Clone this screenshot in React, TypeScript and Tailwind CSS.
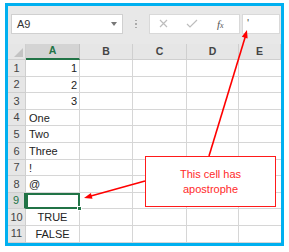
import { Fragment } from "react";

const cols = ["A", "B", "C", "D", "E"];

const rows: { a: string; align: string }[] = [
  { a: "1", align: "text-right pr-[2px]" },
  { a: "2", align: "text-right pr-[2px]" },
  { a: "3", align: "text-right pr-[2px]" },
  { a: "One", align: "text-left pl-[3px]" },
  { a: "Two", align: "text-left pl-[3px]" },
  { a: "Three", align: "text-left pl-[3px]" },
  { a: "!", align: "text-left pl-[3px]" },
  { a: "@", align: "text-left pl-[3px]" },
  { a: "", align: "text-left pl-[3px]" },
  { a: "TRUE", align: "text-center" },
  { a: "FALSE", align: "text-center" },
];

export default function App() {
  return (
    <div className="relative w-[289px] h-[252px] bg-white font-['Liberation_Sans',Arial,sans-serif] text-[11px] text-[#222] overflow-hidden">
      <div className="ml-[5px] mt-[3px] w-[279px] h-[243px] border-[3px] border-[#00b0f0] flex flex-col bg-white">
        {/* Name box + formula bar */}
        <div className="h-[38px] shrink-0 bg-[#e8e8e8] flex items-start pt-[8px] pl-[3px]">
          <div className="w-[112px] h-[20px] bg-white border border-[#d0d0d0] flex items-center justify-between pl-[5px] pr-[5px]">
            <span className="text-[11px] text-[#333]">A9</span>
            <span className="w-0 h-0 border-l-[3.5px] border-r-[3.5px] border-t-[4px] border-l-transparent border-r-transparent border-t-[#777]" />
          </div>
          <div className="w-[26px] h-[20px] flex flex-col items-center justify-center gap-[2px]">
            <span className="w-[1.5px] h-[1.5px] bg-[#aaa]" />
            <span className="w-[1.5px] h-[1.5px] bg-[#aaa]" />
            <span className="w-[1.5px] h-[1.5px] bg-[#aaa]" />
          </div>
          <div className="w-[91px] h-[20px] bg-white border border-[#d9d9d9] flex items-center">
            <svg width="60" height="18" viewBox="0 0 60 18">
              <path d="M10 5 L17 12 M17 5 L10 12" stroke="#bdbdbd" strokeWidth="1.2" fill="none" />
              <path d="M37 9 L40 12 L47 5" stroke="#bdbdbd" strokeWidth="1.2" fill="none" />
            </svg>
            <span className="ml-[7px] font-['Liberation_Serif',serif] italic text-[11px] text-[#555]">
              f<span className="text-[8px]">x</span>
            </span>
          </div>
          <div className="ml-[2px] w-[38px] h-[20px] bg-white border border-[#d9d9d9] pl-[4px] text-[11px] text-[#555] leading-[16px]">
            '
          </div>
        </div>

        {/* Sheet grid */}
        <div className="grid grid-cols-[18px_54px_53px_54px_52px_42px] grid-rows-[16px_repeat(11,16.6px)]">
          <div className="bg-[#e6e6e6] border-r border-b border-[#cfcfcf] relative">
            <svg className="absolute right-[2px] bottom-[2px]" width="9" height="9" viewBox="0 0 9 9">
              <polygon points="9,0 9,9 0,9" fill="#c3c3c3" />
            </svg>
          </div>
          {cols.map((c) => (
            <div
              key={c}
              className={
                c === "A"
                  ? "bg-[#d4d4d4] border-r border-[#c2c2c2] border-b-2 border-b-[#217346] flex items-center justify-center text-[#217346] font-bold text-[10.5px]"
                  : "bg-[#e6e6e6] border-r border-b border-[#cfcfcf] flex items-center justify-center text-[#444] font-bold text-[10.5px]"
              }
            >
              {c}
            </div>
          ))}

          {rows.map((r, i) => (
            <Fragment key={i}>
              <div
                className={
                  i === 8
                    ? "bg-[#dcdcdc] border-r-2 border-r-[#217346] border-b border-[#cfcfcf] flex items-center justify-center text-[#217346]"
                    : "bg-[#e6e6e6] border-r border-b border-[#cfcfcf] flex items-center justify-center text-[#444]"
                }
              >
                {i + 1}
              </div>
              <div
                className={
                  i === 8
                    ? "relative border-2 border-[#217346]"
                    : `border-r border-b border-[#d6d6d6] leading-[16px] whitespace-nowrap ${r.align}`
                }
              >
                {r.a}
                {i === 8 && (
                  <span className="absolute right-[-4px] bottom-[-4px] w-[5px] h-[5px] bg-[#217346] border border-white" />
                )}
              </div>
              <div className="border-r border-b border-[#d6d6d6]" />
              <div className="border-r border-b border-[#d6d6d6]" />
              <div className="border-r border-b border-[#d6d6d6]" />
              <div className="border-b border-[#d6d6d6]" />
            </Fragment>
          ))}
        </div>
      </div>

      {/* Callout */}
      <div className="absolute left-[145px] top-[156px] w-[131px] h-[51px] bg-white border-[1.5px] border-[#ff1a1a] flex flex-col items-center justify-center text-[#ff2a2a] text-[11px] leading-[15px]">
        <span>This cell has</span>
        <span>apostrophe</span>
      </div>

      {/* Arrows */}
      <svg className="absolute left-0 top-0 pointer-events-none" width="289" height="252" viewBox="0 0 289 252">
        <line x1="209" y1="156" x2="245.5" y2="36" stroke="#ff0000" strokeWidth="1.6" />
        <polygon points="247,30 247.6,38.5 241.8,36.8" fill="#ff0000" />
        <line x1="145" y1="181" x2="90" y2="196.3" stroke="#ff0000" strokeWidth="1.6" />
        <polygon points="84,198 92.5,198.7 90.9,192.96" fill="#ff0000" />
      </svg>
    </div>
  );
}
